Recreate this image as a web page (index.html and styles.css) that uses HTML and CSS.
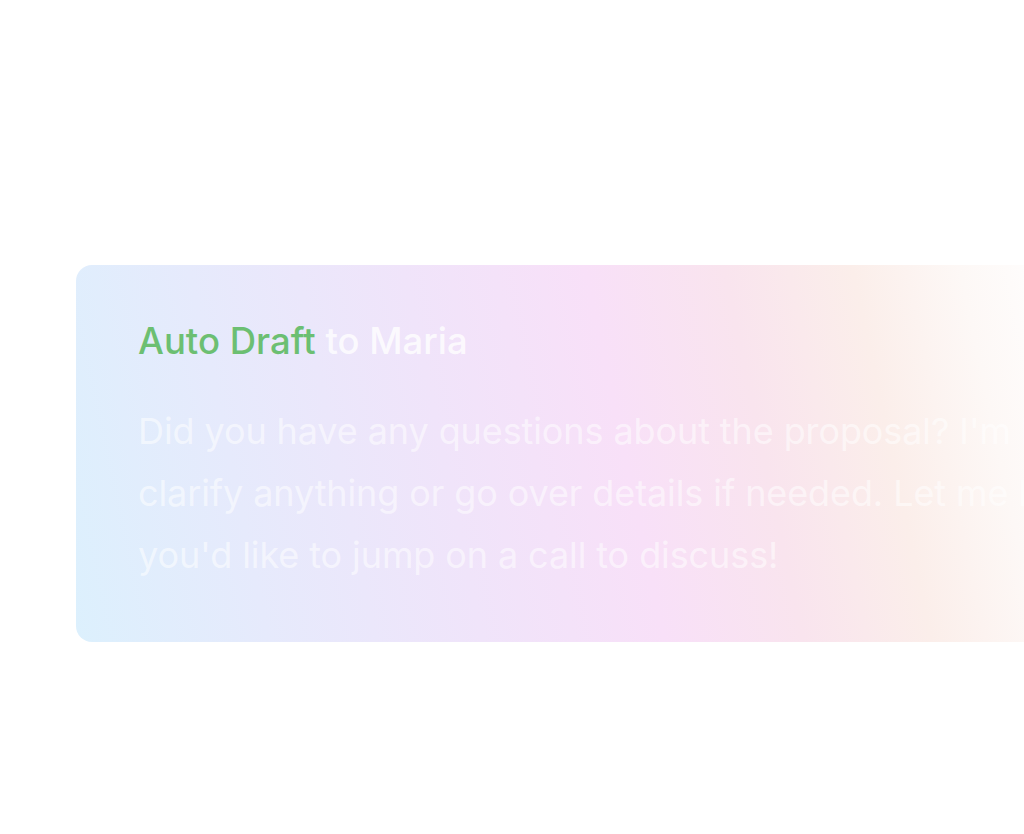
FILE: index.html
```html
<!DOCTYPE html>
<html lang="en">
<head>
<meta charset="utf-8">
<title>Auto Draft</title>
<link rel="stylesheet" href="styles.css">
</head>
<body>
<main class="stage">
  <section class="card">
    <h2 class="card-title"><span class="accent">Auto Draft</span> to Maria</h2>
    <p class="card-body">Did you have any questions about the proposal? I'm happy to<br>clarify anything or go over details if needed. Let me know if<br>you'd like to jump on a call to discuss!</p>
  </section>
</main>
</body>
</html>
```
FILE: styles.css
```css
html, body {
  margin: 0;
  padding: 0;
  background: #ffffff;
  overflow: hidden;
}
.stage {
  width: 1024px;
  height: 834px;
  padding-top: 265px;
  padding-left: 76px;
  box-sizing: border-box;
  overflow: hidden;
  font-family: Inter, "Noto Sans", sans-serif;
}
.card {
  width: 990px;
  height: 377px;
  box-sizing: border-box;
  border-radius: 16px;
  padding: 52px 0 0 62px;
  background: linear-gradient(78deg, #dcf0fd 0%, #e6eafc 18%, #f0e4fa 38%, #f8e0f8 55%, #f9e4ee 68%, #fbeeea 80%, #fdf8f6 90%, #ffffff 100%);
  white-space: nowrap;
}
.card-title {
  margin: 0;
  font-size: 36.5px;
  font-weight: 500;
  line-height: 48px;
  color: rgba(255, 255, 255, 0.8);
}
.accent {
  color: #6cbf72;
}
.card-body {
  margin: 35px 0 0;
  font-size: 36px;
  font-weight: 400;
  line-height: 62px;
  letter-spacing: -0.1px;
  color: rgba(255, 255, 255, 0.55);
}
```
